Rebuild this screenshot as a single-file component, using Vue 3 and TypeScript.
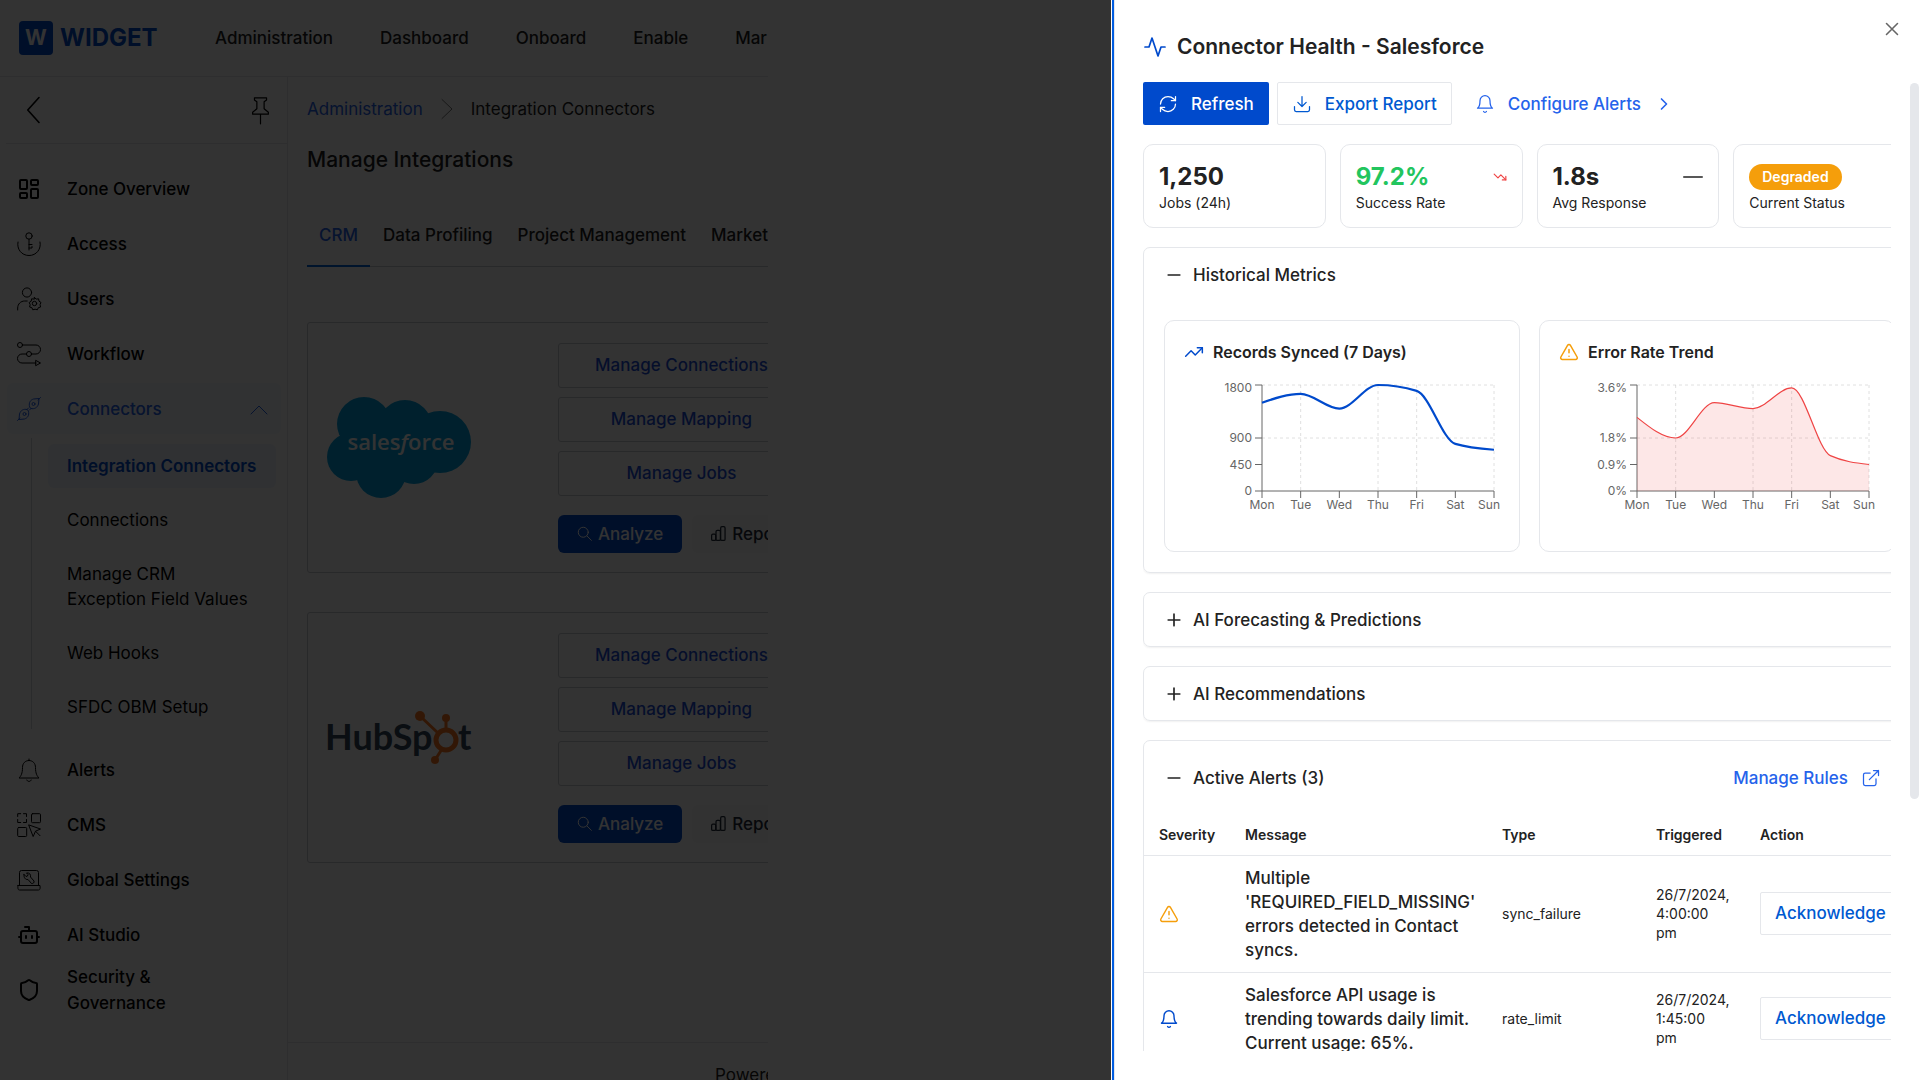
<script setup lang="ts">
import { h, ref } from 'vue'

const icons: Record<string, string> = {
  chevronLeft: '<path d="M16 2 7 12l9 10"/>',
  chevronRight: '<path d="m9 18 6-6-6-6"/>',
  crumb: '<path d="m7 2.500 10 9.500-10 9.500"/>',
  chevronUp: '<path d="m4 17 8-8 8 8"/>',
  pin: '<path d="M7 1.500h10v1.800l-2 1.500v5.700l3.500 3v1.500h-13V13.500l3.500-3V4.800L7 3.300zM12 15v8"/>',
  dashboard: '<rect x="3" y="3" width="7" height="9" rx="1"/><rect x="14" y="3" width="7" height="5" rx="1"/><rect x="14" y="12" width="7" height="9" rx="1"/><rect x="3" y="16" width="7" height="5" rx="1"/>',
  access: '<circle cx="12" cy="4" r="3.200"/><path d="M12 7.200V18M12 12.500h3M12 16h3v-1.500M1 10c-1.500 7 3.500 13.500 11 13.500S24.500 17 23 10"/>',
  users: '<circle cx="10" cy="5.500" r="4.600"/><path d="M.7 23v-2c0-4 3-7 7-7h2.500"/><circle cx="17.500" cy="16.500" r="2.200"/><path d="m17.500 10.500 1.700 1.600 2.400-.3.400 2.400 2 1.300-1 2.200.6 2.300-2.300.7-.9 2.100-2.300-.6-2.300.6-.9-2.100-2.300-.7.6-2.300-1-2.200 2-1.300.4-2.400 2.400.3z"/>',
  workflow: '<circle cx="3" cy="3" r="2.500"/><circle cx="12" cy="12" r="2.500"/><path d="M5.500 3H19a4.500 4.500 0 0 1 0 9h-4.500M9.500 12H5a4.500 4.500 0 0 0 0 9h14M19 18.500l4.500 2.500-4.500 2.500z"/>',
  plug: '<path d="M.5 23.500 3 21M23.500.5 21 3M12.500 9.500c-1-4 1-6.500 4-7.500l5.500-.5L21.500 7c-1 3.500-4 5.500-7.500 4.500zM11.500 14.500c1 4-1 6.500-4 7.500l-5.500.5L2.500 17c1-3.500 4-5.500 7.500-4.500z"/><circle cx="16.500" cy="7" r="1.500"/><circle cx="7.500" cy="17" r="1.500"/><path d="m10 12.500 1.500-1.500M12.500 13l1.500-1.500"/>',
  bellThin: '<path d="M12 1v1.500M12 2.500c4 0 6.500 3 6.500 7 0 6 1.500 8.500 3.500 10.500H2c2-2 3.500-4.500 3.500-10.500 0-4 2.500-7 6.500-7zM9.800 22c.5 2 3.900 2 4.400 0"/>',
  cms: '<path d="M.7 3.500V.7h3M6.500.7h3v2.800M9.500 6.500v3h-3M3.700 9.500h-3v-3"/><rect x="14.500" y=".7" width="9" height="9" rx="1"/><rect x=".7" y="14.500" width="9" height="9" rx="1"/><path d="m12 12 11.500 4-5 2.200-2.200 5zM18.500 18.200l4.500 4.500"/>',
  laptop: '<path d="M2.500 17.500V4.500a2 2 0 0 1 2-2h15a2 2 0 0 1 2 2v13M1 17.500h22c.5 4-.5 4.500-1.500 4.500h-19C1.500 22 .5 21.500 1 17.500z"/><path d="m7 6.500 2 2 1.500-.5L11 6.500 9.500 5c3-.5 4.500 1.500 4 4l3.500 4c.5 1.500-1 3-2.500 2.500L11 11.500c-2.500.5-4.500-2-4-5z"/>',
  bot: '<path d="M12 8V4H8"/><rect width="16" height="12" x="4" y="8" rx="2"/><path d="M2 14h2M20 14h2M15 13v2M9 13v2"/>',
  shield: '<path d="M20 13c0 5-3.500 7.500-7.660 8.950a1 1 0 0 1-.67-.01C7.500 20.500 4 18 4 13V6a1 1 0 0 1 1-1c2 0 4.500-1.200 6.240-2.720a1.170 1.170 0 0 1 1.520 0C14.510 3.810 17 5 19 5a1 1 0 0 1 1 1z"/>',
  search: '<circle cx="10" cy="10" r="8"/><path d="m16 16 7 7"/>',
  bars: '<rect x="1" y="13" width="6.500" height="10" rx="2"/><rect x="8" y="7" width="7" height="16" rx="2"/><rect x="15.500" y="1" width="7" height="22" rx="2"/>',
  pulse: '<path d="M22 12h-4l-3 9L9 3l-3 9H2"/>',
  refresh: '<path d="M3 12a9 9 0 0 1 9-9 9.750 9.750 0 0 1 6.740 2.740L21 8"/><path d="M21 3v5h-5"/><path d="M21 12a9 9 0 0 1-9 9 9.750 9.750 0 0 1-6.740-2.740L3 16"/><path d="M8 16H3v5"/>',
  download: '<path d="M21 15v4a2 2 0 0 1-2 2H5a2 2 0 0 1-2-2v-4"/><path d="m7 10 5 5 5-5M12 15V3"/>',
  bell: '<path d="M6 8a6 6 0 0 1 12 0c0 7 3 9 3 9H3s3-2 3-9"/><path d="M10.300 21a1.940 1.940 0 0 0 3.400 0"/>',
  close: '<path d="M18 6 6 18M6 6l12 12"/>',
  trendUp: '<path d="m22 7-8.500 8.500-5-5L2 17"/><path d="M16 7h6v6"/>',
  trendDown: '<path d="m22 17-8.500-8.500-5 5L2 7"/><path d="M16 17h6v-6"/>',
  dash: '<path d="M1 12h22"/>',
  minus: '<path d="M5 12h14"/>',
  plus: '<path d="M5 12h14M12 5v14"/>',
  warning: '<path d="m21.730 18-8-14a2 2 0 0 0-3.480 0l-8 14A2 2 0 0 0 4 21h16a2 2 0 0 0 1.730-3M12 9v4M12 17h.01"/>',
  external: '<path d="M15 3h6v6M10 14 21 3M18 13v6a2 2 0 0 1-2 2H5a2 2 0 0 1-2-2V8a2 2 0 0 1 2-2h6"/>',
}

interface IconProps { name: string; size?: number; weight?: number }

const Icon = (props: IconProps) => h('svg', {
  viewBox: '0 0 24 24',
  width: props.size ?? 20,
  height: props.size ?? 20,
  fill: 'none',
  stroke: 'currentColor',
  'stroke-width': props.weight ?? 1.5,
  'stroke-linecap': 'round',
  'stroke-linejoin': 'round',
  'aria-hidden': 'true',
  style: 'flex: none; display: block; overflow: visible',
  innerHTML: icons[props.name],
})

const topNav = ['Administration', 'Dashboard', 'Onboard', 'Enable', 'Mar']

const menuTop = [
  { label: 'Zone Overview', icon: 'dashboard', weight: 2 },
  { label: 'Access', icon: 'access', weight: 1 },
  { label: 'Users', icon: 'users', weight: 1 },
  { label: 'Workflow', icon: 'workflow', weight: 1 },
]
const subMenu = ['Integration Connectors', 'Connections', 'Manage CRM\nException Field Values', 'Web Hooks', 'SFDC OBM Setup']
const menuBottom = [
  { label: 'Alerts', icon: 'bellThin', weight: 1 },
  { label: 'CMS', icon: 'cms', weight: 1 },
  { label: 'Global Settings', icon: 'laptop', weight: 1 },
  { label: 'AI Studio', icon: 'bot', weight: 2 },
  { label: 'Security & Governance', icon: 'shield', weight: 2 },
]

const tabs = ['CRM', 'Data Profiling', 'Project Management', 'Market']
const activeTab = ref('CRM')
const connectors = ['Salesforce', 'HubSpot']
const connectorLinks = ['Manage Connections', 'Manage Mapping', 'Manage Jobs']

interface Chart {
  title: string
  icon: string
  tone: string
  color: string
  max: number
  values: number[]
  ticks: { value: number; label: string; shift: number }[]
  area: boolean
}

const days = ['Mon', 'Tue', 'Wed', 'Thu', 'Fri', 'Sat', 'Sun']
const gridDays = [1, 3, 4, 6]
const charts: Chart[] = [
  {
    title: 'Records Synced (7 Days)', icon: 'trendUp', tone: 'blue', color: '#004acc', max: 1800, area: false,
    values: [1500, 1650, 1400, 1800, 1700, 800, 700],
    ticks: [
      { value: 1800, label: '1800', shift: 3 }, { value: 900, label: '900', shift: 0 },
      { value: 450, label: '450', shift: 0 }, { value: 0, label: '0', shift: 0 },
    ],
  },
  {
    title: 'Error Rate Trend', icon: 'warning', tone: 'amber', color: '#ef4444', max: 3.6, area: true,
    values: [2.5, 1.8, 3, 2.8, 3.5, 1.2, 0.9],
    ticks: [
      { value: 3.6, label: '3.6%', shift: 3 }, { value: 1.8, label: '1.8%', shift: 0 },
      { value: 0.9, label: '0.9%', shift: 0 }, { value: 0, label: '0%', shift: 0 },
    ],
  },
]

const plot = { left: 77, right: 309, top: 9, bottom: 115 }
const xAt = (i: number) => plot.left + ((plot.right - plot.left) * i) / (days.length - 1)
const yAt = (v: number, max: number) => plot.bottom - ((plot.bottom - plot.top) * v) / max

/* Monotone cubic interpolation, so that the curve never overshoots a sample. */
function curve(chart: Chart): string {
  const pts = chart.values.map((v, i) => [xAt(i), yAt(v, chart.max)])
  const n = pts.length
  const step = pts[1][0] - pts[0][0]
  const slope = pts.slice(1).map((p, i) => (p[1] - pts[i][1]) / step)
  const m: number[] = new Array(n).fill(0)
  for (let i = 1; i < n - 1; i++) {
    const a = slope[i - 1]
    const b = slope[i]
    m[i] = (Math.sign(a) + Math.sign(b)) * Math.min(Math.abs(a), Math.abs(b), Math.abs(a + b) / 4)
  }
  m[0] = (3 * slope[0] - m[1]) / 2
  m[n - 1] = (3 * slope[n - 2] - m[n - 2]) / 2
  let d = `M${pts[0][0]},${pts[0][1]}`
  for (let i = 0; i < n - 1; i++) {
    const [x0, y0] = pts[i]
    const [x1, y1] = pts[i + 1]
    d += `C${x0 + step / 3},${y0 + (m[i] * step) / 3} ${x1 - step / 3},${y1 - (m[i + 1] * step) / 3} ${x1},${y1}`
  }
  return d
}
const areaPath = (chart: Chart) => `${curve(chart)}L${plot.right},${plot.bottom}L${plot.left},${plot.bottom}Z`

const alerts = [
  { icon: 'warning', tone: 'amber', message: "Multiple 'REQUIRED_FIELD_MISSING' errors detected in Contact syncs.", type: 'sync_failure', time: '26/7/2024, 4:00:00 pm' },
  { icon: 'bell', tone: 'blue', message: 'Salesforce API usage is trending towards daily limit. Current usage: 65%.', type: 'rate_limit', time: '26/7/2024, 1:45:00 pm' },
]
</script>

<template>
  <div class="screen">
    <div class="page">
      <header class="topbar">
        <a class="brand" href="#">
          <span class="brand-mark">W</span>
          <span class="brand-name">WIDGET</span>
        </a>
        <nav class="topnav">
          <a v-for="item in topNav" :key="item" href="#">{{ item }}</a>
        </nav>
      </header>

      <div class="columns">
        <aside class="sidebar">
          <div class="side-tools">
            <button class="bare" aria-label="Collapse"><Icon name="chevronLeft" :size="30" :weight="1.3" /></button>
            <button class="bare" aria-label="Pin"><Icon name="pin" :size="29" :weight="1" /></button>
          </div>
          <nav class="menu">
            <a v-for="item in menuTop" :key="item.label" class="menu-item" href="#">
              <span class="menu-icon"><Icon :name="item.icon" :size="24" :weight="item.weight" /></span>
              <span>{{ item.label }}</span>
            </a>
            <a class="menu-item open" href="#">
              <span class="menu-icon"><Icon name="plug" :size="24" :weight="1" /></span>
              <span class="grow">Connectors</span>
              <Icon name="chevronUp" :size="24" :weight="1" />
            </a>
            <div class="submenu">
              <a v-for="(item, i) in subMenu" :key="item" :class="{ current: i === 0 }" href="#">{{ item }}</a>
            </div>
            <a v-for="item in menuBottom" :key="item.label" class="menu-item" href="#">
              <span class="menu-icon"><Icon :name="item.icon" :size="24" :weight="item.weight" /></span>
              <span class="menu-label">{{ item.label }}</span>
            </a>
          </nav>
        </aside>

        <div class="main-col">
          <main class="main">
            <div class="crumbs">
              <a href="#">Administration</a>
              <Icon name="crumb" :size="24" :weight="1" />
              <span>Integration Connectors</span>
            </div>
            <h1>Manage Integrations</h1>
            <div class="tabs">
              <button v-for="tab in tabs" :key="tab" :class="{ active: tab === activeTab }" @click="activeTab = tab">{{ tab }}</button>
            </div>
            <section v-for="name in connectors" :key="name" class="connector">
              <div class="logo-cell">
                <svg v-if="name === 'Salesforce'" width="144" height="101" viewBox="0 0 144 101" role="img" aria-label="Salesforce">
                  <g fill="#00a1e0">
                    <circle cx="37" cy="27" r="27" /><circle cx="78" cy="30" r="27" /><circle cx="113" cy="45" r="31" />
                    <circle cx="24" cy="60" r="24" /><circle cx="54" cy="76" r="25" /><circle cx="87" cy="63" r="24" />
                    <path d="M25 36h90v34H30z" />
                  </g>
                  <text x="74" y="53" text-anchor="middle" class="sf-word">sales<tspan font-style="italic">f</tspan>orce</text>
                </svg>
                <svg v-else width="144" height="56" viewBox="0 0 144 56" role="img" aria-label="HubSpot">
                  <text x="-2" y="40" class="hs-word">HubSp</text>
                  <text x="131" y="40" class="hs-word">t</text>
                  <g stroke="#f8761f" fill="none">
                    <circle cx="119" cy="30" r="10" stroke-width="5" />
                    <path d="M119 20V8M111 23 93 6M115 39l-7 11" stroke-width="3" />
                  </g>
                  <g fill="#f8761f"><circle cx="93" cy="6" r="5" /><circle cx="119" cy="8" r="4" /><circle cx="108" cy="50" r="4" /></g>
                </svg>
              </div>
              <div class="connector-actions">
                <button v-for="link in connectorLinks" :key="link" class="outline-wide">{{ link }}</button>
                <div class="quick">
                  <button class="analyze"><Icon name="search" :size="15" :weight="1.6" />Analyze</button>
                  <button class="report"><Icon name="bars" :size="15" :weight="2" />Reports</button>
                </div>
              </div>
            </section>
          </main>
          <footer class="footer">Powered by</footer>
        </div>
      </div>
    </div>
    <div class="overlay"></div>

    <aside class="drawer" role="dialog" aria-label="Connector Health">
      <div class="drawer-head">
        <Icon name="pulse" :size="24" :weight="1.7" class="blue" />
        <h2>Connector Health - Salesforce</h2>
        <button class="bare close" aria-label="Close"><Icon name="close" :size="22" :weight="1.7" /></button>
      </div>

      <div class="drawer-body">
        <div class="viewport">
          <div class="content">
            <div class="actions">
              <button class="btn primary"><Icon name="refresh" />Refresh</button>
              <button class="btn outline"><Icon name="download" />Export Report</button>
              <button class="btn ghost"><Icon name="bell" />Configure Alerts<Icon name="chevronRight" :weight="2" /></button>
            </div>

            <div class="stats">
              <div class="stat"><div class="stat-top"><strong>1,250</strong></div><span>Jobs (24h)</span></div>
              <div class="stat"><div class="stat-top"><strong class="green">97.2%</strong><Icon name="trendDown" :size="14" :weight="2" class="red" /></div><span>Success Rate</span></div>
              <div class="stat"><div class="stat-top"><strong>1.8s</strong><Icon name="dash" :size="20" :weight="2" /></div><span>Avg Response</span></div>
              <div class="stat"><div class="stat-top"><span class="badge">Degraded</span></div><span>Current Status</span></div>
            </div>

            <section class="panel">
              <button class="panel-head"><Icon name="minus" :weight="2" />Historical Metrics</button>
              <div class="charts">
                <div v-for="chart in charts" :key="chart.title" class="chart">
                  <h3><Icon :name="chart.icon" :class="chart.tone" :weight="1.8" />{{ chart.title }}</h3>
                  <svg class="plot" width="314" height="154" viewBox="0 0 314 154" role="img" :aria-label="chart.title">
                    <g stroke="#ccc" stroke-opacity=".6" stroke-dasharray="3 3">
                      <path v-for="t in chart.ticks.slice(0, 2)" :key="t.label" :d="`M${plot.left} ${yAt(t.value, chart.max)}H${plot.right}`" />
                      <path v-for="d in gridDays" :key="d" :d="`M${xAt(d)} ${plot.top}V${plot.bottom}`" />
                    </g>
                    <g stroke="#666" fill="none">
                      <path :d="`M${plot.left} ${plot.bottom}H${plot.right}`" />
                      <path :d="`M${plot.left} ${plot.top}V${plot.bottom}`" />
                      <path v-for="t in chart.ticks" :key="t.label" :d="`M${plot.left - 7} ${yAt(t.value, chart.max)}h7`" />
                      <path v-for="(d, i) in days" :key="d" :d="`M${xAt(i)} ${plot.bottom}v7`" />
                    </g>
                    <path v-if="chart.area" :d="areaPath(chart)" :fill="chart.color" fill-opacity=".13" />
                    <path :d="curve(chart)" :stroke="chart.color" :stroke-width="chart.area ? 1.2 : 2.2" fill="none" />
                    <text v-for="t in chart.ticks" :key="t.label" :x="plot.left - 10" :y="yAt(t.value, chart.max) + 4 + t.shift" text-anchor="end">{{ t.label }}</text>
                    <text v-for="(d, i) in days" :key="d" :x="i === 6 ? 315 : xAt(i)" :y="plot.bottom + 18" :text-anchor="i === 6 ? 'end' : 'middle'">{{ d }}</text>
                  </svg>
                </div>
              </div>
            </section>

            <section class="panel"><button class="panel-head"><Icon name="plus" :weight="2" />AI Forecasting &amp; Predictions</button></section>
            <section class="panel"><button class="panel-head"><Icon name="plus" :weight="2" />AI Recommendations</button></section>

            <section class="panel">
              <div class="alerts-head">
                <button class="panel-head"><Icon name="minus" :weight="2" />Active Alerts (3)</button>
                <button class="btn ghost">Manage Rules<Icon name="external" /></button>
              </div>
              <table>
                <colgroup><col class="c1" /><col class="c2" /><col class="c3" /><col class="c4" /><col /></colgroup>
                <thead>
                  <tr><th>Severity</th><th>Message</th><th>Type</th><th>Triggered</th><th>Action</th></tr>
                </thead>
                <tbody>
                  <tr v-for="alert in alerts" :key="alert.type">
                    <td><Icon :name="alert.icon" :class="alert.tone" :weight="1.7" /></td>
                    <td class="message">{{ alert.message }}</td>
                    <td>{{ alert.type }}</td>
                    <td class="time">{{ alert.time }}</td>
                    <td><button class="btn outline">Acknowledge</button></td>
                  </tr>
                </tbody>
              </table>
            </section>
          </div>
        </div>
        <div class="track"><div class="thumb"></div></div>
      </div>
    </aside>
  </div>
</template>

<style>
body { margin: 0; }
</style>

<style scoped>
* { box-sizing: border-box; }
.screen {
  position: relative;
  height: 100vh;
  overflow: hidden;
  background: #fff;
  color: #222;
  font-family: Inter, "Liberation Sans", sans-serif;
  font-size: 17px;
  line-height: 24px;
}
a { color: inherit; text-decoration: none; }
button { font: inherit; color: inherit; background: none; border: 0; margin: 0; padding: 0; white-space: nowrap; cursor: pointer; }
h1, h2, h3 { margin: 0; font-size: 21px; }
.blue { color: #004acc; }
.amber { color: #f59e0b; }
.red { color: #ef4444; }
.green { color: #22c55e; }
.grow { flex: 1; }
.bare { display: flex; align-items: center; }

.page { display: flex; flex-direction: column; width: 40%; height: 100%; overflow: hidden; }
.overlay { position: absolute; inset: 0; background: rgba(0, 0, 0, 0.8); }
.topbar { display: flex; align-items: center; flex: none; height: 77px; padding-left: 19px; border-bottom: 1px solid #e5e7eb; }
.brand { display: flex; align-items: center; gap: 7px; width: 196px; flex: none; color: #004acc; }
.brand-mark { display: flex; align-items: center; justify-content: center; width: 34px; height: 34px; border-radius: 4px; background: #004acc; color: #fff; font-size: 21px; font-weight: 700; }
.brand-name { font-size: 24px; font-weight: 700; }
.topnav { display: flex; gap: 47px; font-weight: 500; white-space: nowrap; }

.columns { display: flex; flex: 1; min-height: 0; }
.sidebar { flex: none; width: 288px; border-right: 1px solid #e5e7eb; color: #000; }
.side-tools { display: flex; align-items: center; justify-content: space-between; height: 67px; margin-left: 6px; padding: 0 12px 0 13px; border-bottom: 1px solid #e5e7eb; }
.menu { display: flex; flex-direction: column; gap: 4px; padding: 19px 6px 0 7px; font-weight: 500; }
.menu-item { display: flex; align-items: center; height: 51px; padding: 0 10px; border-radius: 6px; line-height: 26px; }
.menu-icon { width: 50px; }
.menu-label { width: 130px; }
.menu-item.open { background: #f4f8ff; color: #2563eb; }
.submenu { display: flex; flex-direction: column; gap: 10px; margin: 0 0 11px 24px; padding: 6px 5px 0 16px; border-left: 1px solid #d1d5db; font-weight: 400; }
.submenu a { padding: 10px 0 9px 19px; border-radius: 6px; line-height: 25px; white-space: pre; }
.submenu .current { background: #eff5ff; color: #004acc; font-weight: 600; }

.main-col { display: flex; flex-direction: column; flex: none; width: 1000px; }
.main { flex: 1; padding: 20px 0 0 19px; }
.crumbs { display: flex; align-items: center; gap: 12px; height: 24px; }
.crumbs a { color: #2563eb; }
.crumbs svg { color: #777; }
h1 { margin-top: 24px; line-height: 30px; font-weight: 500; }
.tabs { display: flex; gap: 1px; height: 62px; margin: 30px 0 55px; border-bottom: 1px solid #c8cbd0; }
.tabs button { padding: 0 12px; height: 62px; border-bottom: 2px solid transparent; font-weight: 500; }
.tabs .active { color: #2563eb; border-bottom-color: #0066dd; }
.connector { display: flex; align-items: center; height: 251px; margin-bottom: 39px; padding-left: 19px; border: 1px solid #c8cbd0; border-radius: 3px; }
.logo-cell { width: 231px; }
.logo-cell svg { display: block; overflow: visible; }
.sf-word { fill: #fff; font: 600 22px "Open Sans", sans-serif; }
.hs-word { fill: #33475b; font: 700 36px Lato, sans-serif; }
.connector-actions { display: flex; flex-direction: column; gap: 9px; width: 247px; }
.outline-wide { height: 45px; border: 1px solid #c8cbd0; border-radius: 3px; color: #1d4ed8; font-weight: 500; }
.quick { display: flex; gap: 10px; margin-top: 10px; font-weight: 500; }
.quick button { display: flex; align-items: center; gap: 6px; height: 38px; padding: 0 19px; border-radius: 6px; }
.analyze { background: #004acc; color: #fff; }
.report { color: #1f2937; background: #fafafa; }
.footer { flex: none; height: 38px; padding: 20px 0 0 427px; border-top: 1px solid #e5e7eb; white-space: nowrap; }

.drawer {
  position: absolute;
  inset: 0 0 0 auto;
  display: flex;
  flex-direction: column;
  width: 42%;
  width: round(42vw, 1px);
  padding: 0 0 29px 28px;
  background: #fff;
  border-left: 1px solid #e5e7eb;
  box-shadow: 0 0 0 2px #005ce0, 0 0 0 3px #fff;
}
.drawer-head { display: flex; align-items: center; gap: 10px; height: 82px; padding-top: 12px; }
h2 { flex: 1; line-height: 30px; font-weight: 600; }
.close { align-self: flex-start; margin: 6px 17px 0 0; color: #666; }
.drawer-body { display: flex; flex: 1; min-height: 0; }
.viewport { flex: 1; min-width: 0; overflow: hidden; }
.content { width: 773px; }
.track { width: 10px; margin-left: 19px; padding-top: 1px; }
.thumb { width: 9px; height: 74%; border-radius: 5px; background: #e5e7eb; }

.actions { display: flex; gap: 8px; margin-bottom: 19px; }
.btn { display: flex; align-items: center; gap: 13px; height: 43px; padding: 0 14px; border: 1px solid transparent; border-radius: 2px; font-size: 17px; font-weight: 500; }
.primary { background: #004acc; color: #fff; }
.outline { border-color: #e5e7eb; color: #0059d1; }
.ghost { color: #2563eb; }

.stats { display: grid; grid-template-columns: repeat(4, 1fr); gap: 14px; margin-bottom: 19px; }
.stat { height: 84px; padding: 16px 15px 0; border: 1px solid #e5e7eb; border-radius: 10px; font-size: 14px; }
.stat > span { display: block; line-height: 20px; }
.stat-top { display: flex; align-items: center; justify-content: space-between; height: 32px; }
.stat strong { font-size: 24px; line-height: 32px; font-weight: 700; }
.badge { padding: 0 13px; border-radius: 13px; background: #f59e0b; color: #fff; font-weight: 600; line-height: 26px; }

.panel { margin-bottom: 19px; border: 1px solid #e5e7eb; border-radius: 7px; box-shadow: 0 1px 2px rgba(0, 0, 0, 0.06); }
.panel-head { display: flex; align-items: center; gap: 9px; width: 100%; height: 53px; padding: 0 0 0 20px; font-weight: 500; }
.charts { display: grid; grid-template-columns: 1fr 1fr; gap: 19px; padding: 19px 20px 20px; }
.chart { height: 232px; padding: 19px; border: 1px solid #e5e7eb; border-radius: 10px; }
.chart h3 { display: flex; align-items: center; gap: 9px; margin-bottom: 12px; font-size: 16px; line-height: 24px; font-weight: 600; }
.plot { display: block; margin-left: 1px; overflow: visible; }
.plot text { fill: #666; font-size: 12px; }

.alerts-head { display: flex; align-items: center; height: 73px; padding-right: 19px; }
table { width: 100%; table-layout: fixed; border-collapse: collapse; font-size: 14px; line-height: 19px; }
.c1 { width: 86px; }
.c2 { width: 257px; }
.c3 { width: 154px; }
.c4 { width: 104px; }
th { height: 41px; padding: 0 15px; text-align: left; font-weight: 600; }
td { padding: 10px 12px 10px 15px; }
tr { border-bottom: 1px solid #e5e7eb; }
.message { font-size: 17px; line-height: 24px; font-weight: 500; }
.time { padding-right: 20px; }
</style>
